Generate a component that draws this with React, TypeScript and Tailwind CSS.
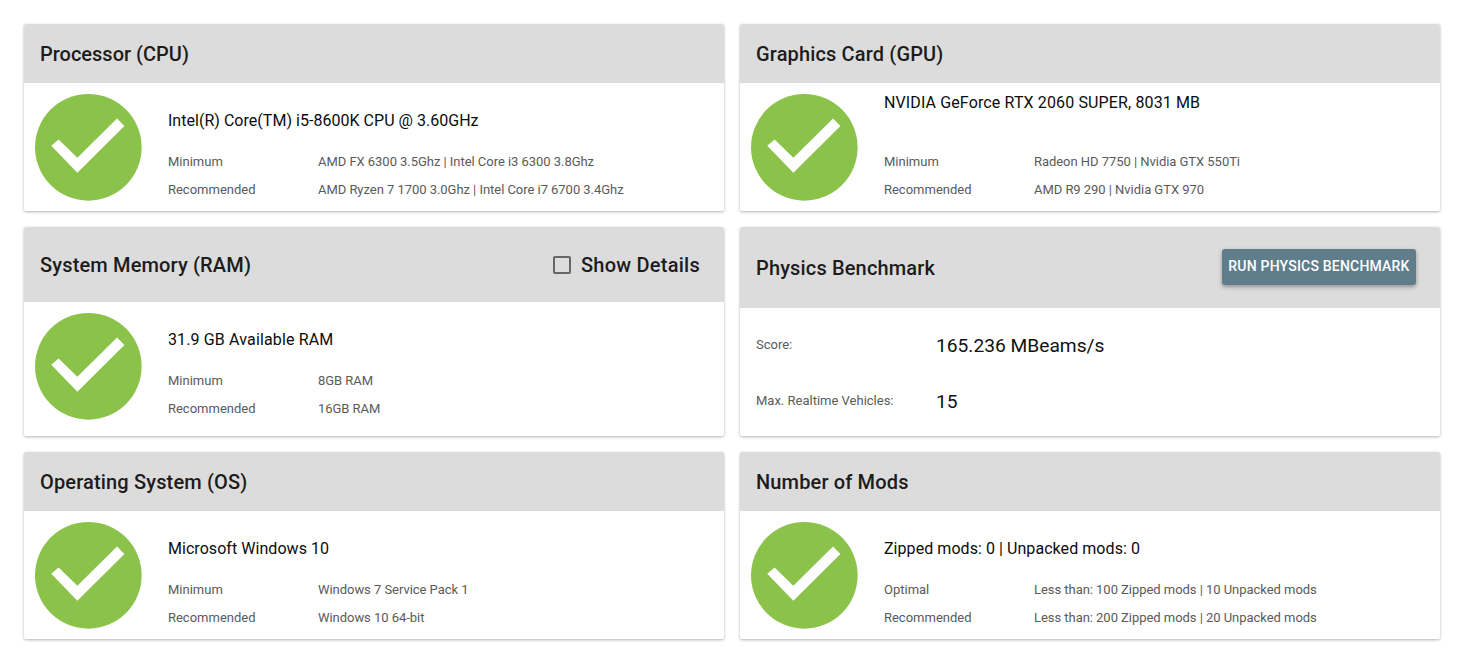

import React from "react";

function Check() {
  return (
    <svg viewBox="0 0 107 107" className="w-[106.67px] h-[106.67px] shrink-0 block overflow-visible">
      <circle cx="53.5" cy="53.5" r="53.5" fill="#8bc34a" />
      <path d="M16.3 52 L42.5 79 L89.7 32 L82.3 24.6 L42.5 64 L23.7 45.6 Z" fill="#fff" />
    </svg>
  );
}

function Card({ children }: { children: React.ReactNode }) {
  return (
    <div className="bg-white rounded-[2px] overflow-hidden shadow-[0_1px_3px_rgba(0,0,0,0.3)] flex flex-col">
      {children}
    </div>
  );
}

function Header({ title, h, t = "tracking-[0.15px]", children }: { title: string; h: string; t?: string; children?: React.ReactNode }) {
  return (
    <div className={"bg-[#dcdcdc] flex shrink-0 items-center justify-between pl-4 " + h}>
      <span className={"text-[20px] leading-[24px] font-medium text-[#1c1c1c] " + t}>{title}</span>
      {children}
    </div>
  );
}

function Req({
  title,
  rows,
  titleClass = "h-[53px] pt-[1px] items-center",
  t = "tracking-[0.05px]",
}: {
  title: string;
  rows: [string, string][];
  titleClass?: string;
  t?: string;
}) {
  return (
    <div className="flex pl-[10.67px] pt-[10.67px] pb-[10.67px]">
      <Check />
      <div className="ml-[26.67px] flex-1 min-w-0">
        <div className={"flex text-[16px] leading-[20px] font-normal text-[#0c0c0c] " + t + " " + titleClass}>{title}</div>
        <div className="flex flex-col pt-[1px]">
          {rows.map(([a, b]) => (
            <div key={a} className="flex h-[28px] items-center text-[13px] text-[#5a5a5a]">
              <span className="w-[150px] shrink-0">{a}</span>
              <span className="tracking-[-0.04px]">{b}</span>
            </div>
          ))}
        </div>
      </div>
    </div>
  );
}

export default function App() {
  return (
    <div className="bg-white w-[1461px] h-[647px] overflow-hidden pt-[24px] pl-[24px] font-['Roboto',sans-serif]">
      <div className="grid grid-cols-[700px_700px] grid-rows-[187px_209px_187px] gap-4">
        <Card>
          <Header title="Processor (CPU)" h="h-[59px]" t="tracking-normal" />
          <Req
            title="Intel(R) Core(TM) i5-8600K CPU @ 3.60GHz"
            t="tracking-[0.03px]"
            rows={[
              ["Minimum", "AMD FX 6300 3.5Ghz | Intel Core i3 6300 3.8Ghz"],
              ["Recommended", "AMD Ryzen 7 1700 3.0Ghz | Intel Core i7 6700 3.4Ghz"],
            ]}
          />
        </Card>
        <Card>
          <Header title="Graphics Card (GPU)" h="h-[59px]" />
          <Req
            title="NVIDIA GeForce RTX 2060 SUPER, 8031 MB"
            t="tracking-[0.13px]"
            titleClass="h-[53px] items-start -mt-[1px] mb-[1px]"
            rows={[
              ["Minimum", "Radeon HD 7750 | Nvidia GTX 550Ti"],
              ["Recommended", "AMD R9 290 | Nvidia GTX 970"],
            ]}
          />
        </Card>
        <Card>
          <Header title="System Memory (RAM)" h="h-[75px]">
            <label className="flex items-center mr-6">
              <span className="w-[18px] h-[18px] border-2 border-[#666] rounded-[2px] mr-[10px]" />
              <span className="text-[20px] leading-[24px] font-medium text-[#1c1c1c] tracking-[0.25px]">Show Details</span>
            </label>
          </Header>
          <Req
            title="31.9 GB Available RAM"
            t="tracking-[0.14px]"
            rows={[
              ["Minimum", "8GB RAM"],
              ["Recommended", "16GB RAM"],
            ]}
          />
        </Card>
        <Card>
          <Header title="Physics Benchmark" h="h-[81px]">
            <button className="mr-6 w-[194px] h-[36px] mb-[2px] bg-[#607d8b] rounded-[3px] text-white text-[14px] font-medium tracking-[0.2px] shadow-[0_2px_4px_rgba(0,0,0,0.35)] whitespace-nowrap">
              RUN PHYSICS BENCHMARK
            </button>
          </Header>
          <div className="px-4 pt-[10px]">
            <div className="flex h-[56px] items-center">
              <span className="w-[180px] text-[13px] text-[#5a5a5a] pb-[2px]">Score:</span>
              <span className="text-[19.2px] font-normal text-[#111]">165.236 MBeams/s</span>
            </div>
            <div className="flex h-[56px] items-center">
              <span className="w-[180px] text-[13px] text-[#5a5a5a] pb-[2px]">Max. Realtime Vehicles:</span>
              <span className="text-[19.2px] font-normal text-[#111]">15</span>
            </div>
          </div>
        </Card>
        <Card>
          <Header title="Operating System (OS)" h="h-[59px]" />
          <Req
            title="Microsoft Windows 10"
            rows={[
              ["Minimum", "Windows 7 Service Pack 1"],
              ["Recommended", "Windows 10 64-bit"],
            ]}
          />
        </Card>
        <Card>
          <Header title="Number of Mods" h="h-[59px]" />
          <Req
            title="Zipped mods: 0 | Unpacked mods: 0"
            t="tracking-[0.06px]"
            rows={[
              ["Optimal", "Less than: 100 Zipped mods | 10 Unpacked mods"],
              ["Recommended", "Less than: 200 Zipped mods | 20 Unpacked mods"],
            ]}
          />
        </Card>
      </div>
    </div>
  );
}
